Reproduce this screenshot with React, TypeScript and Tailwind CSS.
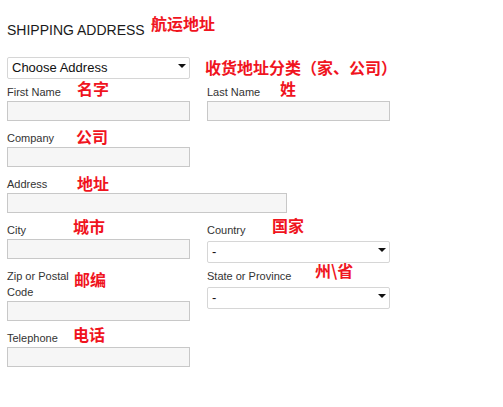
import React from "react";

const notes = [
  { text: "航运地址", left: 151, top: 15 },
  { text: "收货地址分类（家、公司）", left: 205, top: 59 },
  { text: "名字", left: 77, top: 80 },
  { text: "姓", left: 280, top: 80 },
  { text: "公司", left: 76, top: 128 },
  { text: "地址", left: 77, top: 175 },
  { text: "城市", left: 73, top: 218 },
  { text: "国家", left: 272, top: 217 },
  { text: "邮编", left: 74, top: 271 },
  { text: "州\\省", left: 315, top: 262 },
  { text: "电话", left: 73, top: 326 },
];

function Arrow() {
  return (
    <svg
      width="8"
      height="4"
      viewBox="0 0 8 4"
      className="pointer-events-none absolute right-[4px] top-1/2 -translate-y-1/2"
    >
      <path d="M0 0H8L4 4Z" fill="#111" />
    </svg>
  );
}

function Select({ value, className = "" }: { value: string; className?: string }) {
  return (
    <div className={`relative h-[22px] w-[183px] ${className}`}>
      <select
        defaultValue={value}
        className="h-full w-full appearance-none rounded-[2px] border border-[#d6d6d6] bg-white pl-[4px] text-[13px] leading-[20px] text-[#111] outline-none"
      >
        <option>{value}</option>
      </select>
      <Arrow />
    </div>
  );
}

function Field({
  label,
  width = "w-[183px]",
  labelWidth,
  children,
}: {
  label: string;
  width?: string;
  labelWidth?: string;
  children?: React.ReactNode;
}) {
  return (
    <div className={`flex flex-col ${width}`}>
      <label className={`-mt-[1px] mb-[1px] text-[11px] leading-[16px] text-[#333] ${labelWidth ?? ""}`}>{label}</label>
      {children ?? <input type="text" className="h-[20px] w-full border border-[#c8c8c8] bg-[#f6f6f6] outline-none" />}
    </div>
  );
}

export default function App() {
  return (
    <div className="relative h-[407px] w-[503px] overflow-hidden bg-white pl-[7px] pt-[22px] font-['Liberation_Sans',Arial,sans-serif]">
      <h2 className="h-[16px] text-[14px] leading-[16px] text-[#1a1a1a]">SHIPPING ADDRESS</h2>

      <Select value="Choose Address" className="mt-[17px]" />

      <div className="mt-[8px] flex flex-col gap-[10px]">
        <div className="flex gap-[17px]">
          <Field label="First Name" />
          <Field label="Last Name" />
        </div>
        <Field label="Company" />
        <Field label="Address" width="w-[280px]" />
        <div className="flex items-start gap-[17px]">
          <Field label="City" />
          <Field label="Country">
            <Select value="-" className="-mb-[2px]" />
          </Field>
        </div>
        <div className="flex items-start gap-[17px]">
          <Field label="Zip or Postal Code" labelWidth="w-[66px]" />
          <Field label="State or Province">
            <Select value="-" />
          </Field>
        </div>
        <Field label="Telephone" />
      </div>

      {notes.map((n) => (
        <span
          key={n.text}
          className="absolute whitespace-nowrap font-['Noto_Sans_CJK_SC',sans-serif] text-[16px] font-bold leading-[16px] text-[#f0141e]"
          style={{ left: n.left, top: n.top }}
        >
          {n.text}
        </span>
      ))}
    </div>
  );
}
